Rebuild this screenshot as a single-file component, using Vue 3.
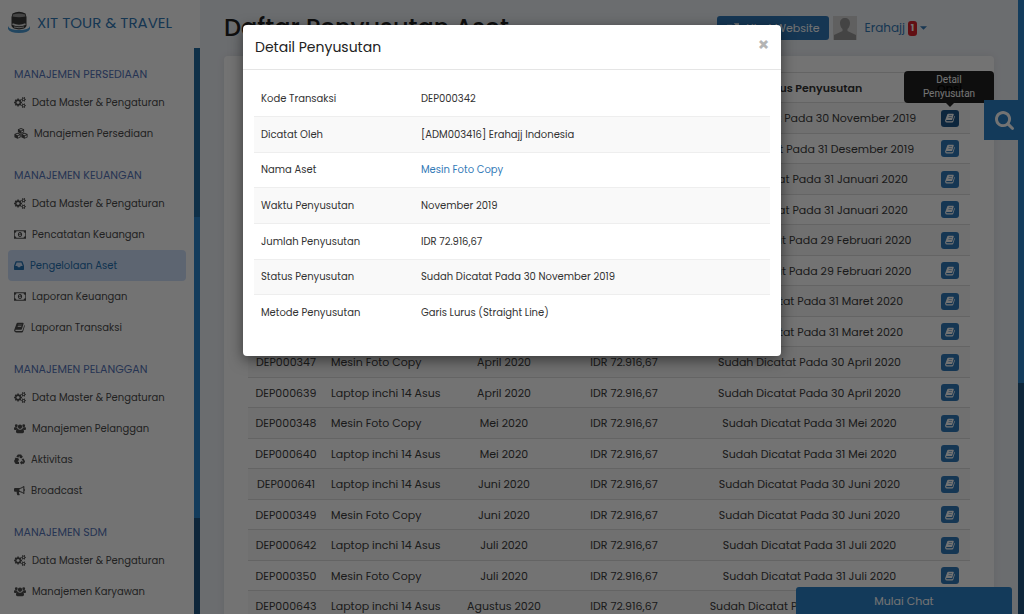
<script setup>
const cogs = 'M896 896q0-106-75-181t-181-75-181 75-75 181 75 181 181 75 181-75 75-181zm768 512q0-52-38-90t-90-38-90 38-38 90q0 53 37.5 90.5t90.5 37.5 90.5-37.5 37.5-90.5zm0-1024q0-52-38-90t-90-38-90 38-38 90q0 53 37.5 90.5t90.5 37.5 90.5-37.5 37.5-90.5zm-384 421v185q0 10-7 19.5t-16 10.5l-155 24q-11 35-32 76 34 48 90 115 7 11 7 20 0 12-7 19-23 30-82.5 89.5t-78.5 59.5q-11 0-21-7l-115-90q-37 19-77 31-11 108-23 155-7 24-30 24h-186q-11 0-20-7.5t-10-17.5l-23-153q-34-10-75-31l-118 89q-7 7-20 7-11 0-21-8-144-133-144-160 0-9 7-19 10-14 41-53t47-61q-23-44-35-82l-152-24q-10-1-17-9.5t-7-19.5v-185q0-10 7-19.5t16-10.5l155-24q11-35 32-76-34-48-90-115-7-11-7-20 0-12 7-20 22-30 82-89t79-59q11 0 21 7l115 90q34-18 77-32 11-108 23-154 7-24 30-24h186q11 0 20 7.5t10 17.5l23 153q34 10 75 31l118-89q8-7 20-7 11 0 21 8 144 133 144 160 0 8-7 19-12 16-42 54t-45 60q23 48 34 82l152 23q10 2 17 10.5t7 19.5zm640 533v140q0 16-149 31-12 27-30 52 51 113 51 138 0 4-4 7-122 71-124 71-8 0-46-47t-52-68q-20 2-30 2t-30-2q-14 21-52 68t-46 47q-2 0-124-71-4-3-4-7 0-25 51-138-18-25-30-52-149-15-149-31v-140q0-16 149-31 13-29 30-52-51-113-51-138 0-4 4-7 4-2 35-20t59-34 30-16q8 0 46 46.5t52 67.5q20-2 30-2t30 2q51-71 92-112l6-2q4 0 124 70 4 3 4 7 0 25-51 138 17 23 30 52 149 15 149 31zm0-1024v140q0 16-149 31-12 27-30 52 51 113 51 138 0 4-4 7-122 71-124 71-8 0-46-47t-52-68q-20 2-30 2t-30-2q-14 21-52 68t-46 47q-2 0-124-71-4-3-4-7 0-25 51-138-18-25-30-52-149-15-149-31v-140q0-16 149-31 13-29 30-52-51-113-51-138 0-4 4-7 4-2 35-20t59-34 30-16q8 0 46 46.5t52 67.5q20-2 30-2t30 2q51-71 92-112l6-2q4 0 124 70 4 3 4 7 0 25-51 138 17 23 30 52 149 15 149 31z'
const book = 'M5.500 1H13q1.300 0 1 1.300l-2.400 8q-.3 1-1.300 1H2.600q-1 0-.6.900.3.800 1.400.800h8q.8 0 1-.7L15 4.500q.9.5.7 1.400l-2.500 8q-.4 1.300-1.700 1.300H3.200Q.8 15.200.2 12.800q-.2-.8.2-1.600L3.600 2.500Q4 1 5.500 1zM6.200 3.900l-.2.800h5.200l.2-.8zM5.500 6.300l-.2.800h5.200l.2-.8z'
const icons = {
  cogs: { box: '0 0 1920 1792', w: 12, d: cogs },
  book: { box: '0 0 16 16', w: 11, d: book },
  cubes: { box: '0 0 20 16', w: 14, d: 'M10 0l4.500 1.800v4.400L10 8.200 5.500 6.200V1.800zM10 1.300L7.200 2.400 10 3.500l2.800-1.100zM10.600 4.600v2.200l2.700-1.200V3.500zM5 7l4.600 1.900v4.700L5 15.800.4 13.600V8.900zM5 8.300L2.200 9.400 5 10.600l2.800-1.200zM5.600 11.800v2.300l2.700-1.300v-2.200zM15 7l4.600 1.900v4.700L15 15.800l-4.600-2.200V8.900zM15 8.300l-2.800 1.100 2.800 1.200 2.800-1.200zM15.600 11.800v2.300l2.700-1.300v-2.200z' },
  money: { box: '0 0 20 16', w: 12, d: 'M0 1h20v14H0zM4 2.400A2.800 2.800 0 0 1 1.200 5.200v5.600A2.800 2.800 0 0 1 4 13.600h12A2.800 2.800 0 0 1 18.800 10.800V5.200A2.800 2.800 0 0 1 16 2.400zM10 3.800c2 0 3.500 1.900 3.500 4.200s-1.500 4.200-3.500 4.200S6.500 10.300 6.500 8 8 3.800 10 3.800zM9.500 5.600L8.300 6.700l.6.6.5-.3v2.400h-.9v.9h3v-.9h-.9V5.600z' },
  inbox: { box: '0 0 16 14', w: 10, d: 'M3.500 0h9c.5 0 .8.300 1 .7L16 7.500v5.500c0 .6-.4 1-1 1H1c-.6 0-1-.4-1-1V7.500L2.500.7c.2-.4.5-.7 1-.7zM4.200 2L2 7.800h3.300l1 2h3.400l1-2H14L11.800 2z' },
  users: { box: '0 0 20 16', w: 12, d: 'M3.800 1a2.400 2.400 0 1 1 0 4.800 2.400 2.400 0 0 1 0-4.800zM16.200 1a2.400 2.400 0 1 1 0 4.800 2.400 2.400 0 0 1 0-4.800zM10 1.500a3.600 3.600 0 1 1 0 7.200 3.600 3.600 0 0 1 0-7.200zM1.600 5.600c.7.800 3.300 1 4 .4-.2 1.500.1 2.400.8 3.100-1.100 0-2 .4-2.700 1.200H1.500C.5 10.300 0 9.700 0 8.800c0-1.300.4-3.200 1.600-3.200zM18.400 5.600c-.7.800-3.300 1-4 .4.2 1.500-.1 2.400-.8 3.100 1.100 0 2 .4 2.700 1.200h2.200c1 0 1.500-.6 1.500-1.500 0-1.300-.4-3.200-1.600-3.200zM6.300 8.700c2 1.700 5.400 1.700 7.400 0 2.200 0 3 2 3 4.500 0 1.700-1.100 2.600-2.600 2.600H5.900c-1.500 0-2.600-.9-2.600-2.600 0-2.500.8-4.500 3-4.500z' },
  recycle: { box: '0 0 16 16', w: 11, d: 'M5.700.6h4.700l1.500 2.600 1.200-.7-1.600 3.700-4-.5 1.200-.7L7.500 2.900 6.200 5.300 3.300 3.700zM13.500 6.300l2.300 4c.4.800 0 1.500-.4 2.200l-1.100 1.700h-3v1.500L8.700 12.600l2.600-3.200v1.500h2.500l-2.800-2.900zM2.600 5.600l3.800.4 1.300 3.800-1.300-.7-1 2.100h1.900v3.300H3.200c-.8 0-1.200-.5-1.600-1.200L.3 11c-.3-.6-.2-1.100.1-1.700l1.500-2.700-1.200-.7z' },
  horn: { box: '0 0 18 16', w: 11, d: 'M16 .5c.6 0 1 .4 1 1v4c1.300.3 1.300 3 0 3.300v4c0 .6-.4 1-1 1-2.300-1.900-4.700-3.200-7.300-3.500-1 .4-.9 1.400-.2 2-.6 1 .2 1.700 1.100 2.500-.7 1.400-3.500 1.200-4.300.4-.5-1.600-1.300-3-.7-5H2c-1 0-2-.8-2-2V6c0-1.100.9-2 2-2h5.500c3 0 5.800-1.500 8.500-3.500zM15.200 2.500C13 4.100 11 5 9 5.400v3.500c2.100.4 4.200 1.300 6.200 2.900z' }
}
const groups = [
  { title: 'MANAJEMEN PERSEDIAAN', items: [['cogs', 'Data Master & Pengaturan'], ['cubes', 'Manajemen Persediaan']] },
  { title: 'MANAJEMEN KEUANGAN', items: [['cogs', 'Data Master & Pengaturan'], ['money', 'Pencatatan Keuangan'], ['inbox', 'Pengelolaan Aset'], ['money', 'Laporan Keuangan'], ['book', 'Laporan Transaksi']] },
  { title: 'MANAJEMEN PELANGGAN', items: [['cogs', 'Data Master & Pengaturan'], ['users', 'Manajemen Pelanggan'], ['recycle', 'Aktivitas'], ['horn', 'Broadcast']] },
  { title: 'MANAJEMEN SDM', items: [['cogs', 'Data Master & Pengaturan'], ['users', 'Manajemen Karyawan']] }
]
const copy = 'Mesin Foto Copy'
const laptop = 'Laptop inchi 14 Asus'
const rows = [
  ['DEP000342', copy, 'November 2019', '30 November 2019'],
  ['DEP000343', copy, 'Desember 2019', '31 Desember 2019'],
  ['DEP000344', copy, 'Januari 2020', '31 Januari 2020'],
  ['DEP000636', laptop, 'Januari 2020', '31 Januari 2020'],
  ['DEP000345', copy, 'Februari 2020', '29 Februari 2020'],
  ['DEP000637', laptop, 'Februari 2020', '29 Februari 2020'],
  ['DEP000346', copy, 'Maret 2020', '31 Maret 2020'],
  ['DEP000638', laptop, 'Maret 2020', '31 Maret 2020'],
  ['DEP000347', copy, 'April 2020', '30 April 2020'],
  ['DEP000639', laptop, 'April 2020', '30 April 2020'],
  ['DEP000348', copy, 'Mei 2020', '31 Mei 2020'],
  ['DEP000640', laptop, 'Mei 2020', '31 Mei 2020'],
  ['DEP000641', laptop, 'Juni 2020', '30 Juni 2020'],
  ['DEP000349', copy, 'Juni 2020', '30 Juni 2020'],
  ['DEP000642', laptop, 'Juli 2020', '31 Juli 2020'],
  ['DEP000350', copy, 'Juli 2020', '31 Juli 2020'],
  ['DEP000643', laptop, 'Agustus 2020', '31 Agustus 2020']
]
const details = [
  ['Kode Transaksi', 'DEP000342'],
  ['Dicatat Oleh', '[ADM003416] Erahajj Indonesia'],
  ['Nama Aset', copy],
  ['Waktu Penyusutan', 'November 2019'],
  ['Jumlah Penyusutan', 'IDR 72.916,67'],
  ['Status Penyusutan', 'Sudah Dicatat Pada 30 November 2019'],
  ['Metode Penyusutan', 'Garis Lurus (Straight Line)']
]
</script>

<template>
  <div class="app">
    <aside class="side">
      <a class="brand" href="#">
        <svg class="logo" viewBox="0 0 24 24">
          <path d="M1 15q1 4 11 4t11-4v3q-2 4-11 4T1 18z" fill="#4d9bd6" />
          <path d="M5.500 2.500Q12-1 18.500 2.500L19.500 6v9q-1 3-7.500 3.500Q5.500 18 4.500 15V6z" fill="#3a3a3a" />
          <path d="M6 3.500q6-2 12 0l.5 2q-6.500 1.500-13 0z" fill="#999" />
          <path d="M5.500 13q6.500 3 13 0" stroke="#ddd" stroke-width="1.500" fill="none" />
          <path d="M7 16q5 1.500 10 0" stroke="#ccc" stroke-width="1" fill="none" />
        </svg>
        <span>XIT TOUR &amp; TRAVEL</span>
      </a>
      <div class="sidebody">
        <nav class="nav">
          <section v-for="g in groups" :key="g.title">
            <h2>{{ g.title }}</h2>
            <a v-for="it in g.items" :key="it[1]" href="#" :class="['item', { active: it[0] === 'inbox' }]">
              <svg :viewBox="icons[it[0]].box" :width="icons[it[0]].w" height="11" fill-rule="evenodd"><path :d="icons[it[0]].d" /></svg>
              <span>{{ it[1] }}</span>
            </a>
          </section>
        </nav>
        <div class="sidescroll"><i></i></div>
      </div>
    </aside>

    <main class="main">
      <header class="head">
        <h1>Daftar Penyusutan Aset</h1>
        <div class="tools">
          <button class="visit">
            <svg viewBox="0 0 16 14" width="12" height="11"><path d="M9 0h7v7l-2.500-2.500L8 10 6 8l5.500-5.500zM2 2h5v2H2v8h10V9h2v5H0V2z" fill="#fff" /></svg>
            Lihat Website
          </button>
          <svg class="avatar" viewBox="0 0 24 24"><path d="M0 0h24v24H0z" fill="#d6d6d6" /><path d="M12 2c3 0 5 2 5 5 0 2-1 5-2.500 6v2L23 19v5H1v-5l8.500-4v-2C8 12 7 9 7 7c0-3 2-5 5-5z" fill="#979797" /></svg>
          <a class="user" href="#">Erahajj <b>1</b><svg viewBox="0 0 8 4" width="7" height="4"><path d="M0 0h8L4 4z" fill="currentColor" /></svg></a>
        </div>
      </header>
      <div class="card">
        <table class="list">
          <colgroup><col class="c1"><col class="c2"><col class="c3"><col class="c4"><col><col class="c6"></colgroup>
          <thead>
            <tr><th>Kode</th><th class="l">Nama Aset</th><th>Waktu</th><th>Jumlah</th><th>Status Penyusutan</th><th>Opsi</th></tr>
          </thead>
          <tbody>
            <tr v-for="(r, i) in rows" :key="r[0]">
              <td>{{ r[0] }}</td><td class="l">{{ r[1] }}</td><td>{{ r[2] }}</td><td>IDR 72.916,67</td><td>Sudah Dicatat Pada {{ r[3] }}</td>
              <td>
                <button :class="['open', { pressed: i === 0 }]" aria-label="Detail Penyusutan">
                  <svg viewBox="0 0 16 16" width="10" height="10"><path :d="book" fill="#fff" fill-rule="evenodd" /></svg>
                </button>
                <div v-if="i === 0" class="tip">Detail Penyusutan</div>
              </td>
            </tr>
          </tbody>
        </table>
      </div>
    </main>
    <div class="pagescroll"><i></i></div>
    <button class="search" aria-label="Cari">
      <svg viewBox="64 128 1664 1664" width="19" height="19"><path d="M1216 832q0-185-131.500-316.500t-316.500-131.500-316.500 131.500-131.500 316.500 131.500 316.500 316.500 131.500 316.500-131.500 131.500-316.500zm512 832q0 52-38 90t-90 38q-54 0-90-38l-343-342q-179 124-399 124-143 0-273.500-55.500t-225-150-150-225-55.500-273.500 55.500-273.500 150-225 225-150 273.500-55.500 273.500 55.500 225 150 150 225 55.500 273.500q0 220-124 399l343 343q37 37 37 90z" fill="#fff" /></svg>
    </button>
    <button class="chat">Mulai Chat</button>

    <div class="backdrop">
      <div class="modal" role="dialog" aria-labelledby="modal-title">
        <header class="mhead">
          <h3 id="modal-title">Detail Penyusutan</h3>
          <button class="close" aria-label="Tutup">×</button>
        </header>
        <div class="mbody">
          <table class="detail">
            <tbody>
              <tr v-for="d in details" :key="d[0]">
                <th scope="row">{{ d[0] }}</th>
                <td><a v-if="d[0] === 'Nama Aset'" href="#">{{ d[1] }}</a><template v-else>{{ d[1] }}</template></td>
              </tr>
            </tbody>
          </table>
        </div>
      </div>
    </div>
  </div>
</template>

<style>
body { margin: 0; }
</style>

<style scoped>
* { box-sizing: border-box; }
.app { position: relative; display: flex; height: 100vh; overflow: hidden; background: #eef1f6; color: #333; font: 11px/16px Poppins, Inter, "Open Sans", sans-serif; }
a { color: #337ab7; text-decoration: none; }
button { border: 0; padding: 0; font: inherit; color: #fff; background: #2f78b8; }
h1, h2, h3 { margin: 0; font-weight: 400; }
.side { display: flex; flex-direction: column; width: 200px; flex: none; background: #fff; }
.brand { display: flex; align-items: center; gap: 6px; height: 48px; padding: 0 0 2px 7px; font-size: 15px; flex: none; white-space: nowrap; }
.logo { width: 24px; height: 24px; }
.sidebody { flex: 1; min-height: 0; display: flex; }
.nav { flex: 1; padding: 0 8px; overflow: hidden; }
.nav h2 { height: 39px; padding: 14px 0 0 6px; font-size: 11px; line-height: 24px; color: #5574b8; white-space: nowrap; }
.item { display: flex; align-items: center; gap: 6px; height: 31px; padding-left: 6px; font-size: 10px; color: #4c4c4c; border-radius: 4px; white-space: nowrap; }
.item svg { fill: currentColor; flex: none; }
.item.active { background: #cfe0fa; color: #2471b2; }
.sidescroll { width: 6px; padding-top: 169px; background: linear-gradient(#236b9f 50%, #1f5580 50%); }
.sidescroll i { display: block; height: 301px; background: #2a86cc; }
.main { flex: 1; min-width: 0; padding: 0 24px; }
.head { display: flex; justify-content: space-between; align-items: center; height: 56px; padding-right: 67px; }
h1 { font-size: 24px; line-height: 32px; font-weight: 500; color: #222; }
.tools { display: flex; align-items: center; gap: 4px; }
.visit { display: flex; align-items: center; justify-content: space-between; width: 112px; height: 24px; padding: 0 9px 0 10px; border-radius: 3px; white-space: nowrap; }
.avatar { width: 24px; height: 24px; }
.user { display: flex; align-items: center; gap: 3px; padding-left: 4px; font-size: 12px; }
.user b { width: 9px; height: 15px; border-radius: 3px; background: #d9232a; color: #fff; font-size: 9px; line-height: 15px; text-align: center; }
.card { padding: 16px 24px; background: #fff; border-radius: 4px; box-shadow: 0 0 8px rgba(0, 0, 0, .08); }
table { width: 100%; border-collapse: collapse; table-layout: fixed; }
.c1 { width: 76px; } .c2 { width: 126px; } .c3 { width: 108px; } .c4 { width: 132px; } .c6 { width: 41px; }
.list th, .list td { height: 31px; padding: 0; border-top: 1px solid #ddd; text-align: center; white-space: nowrap; }
.list tr:nth-child(even) td, .list th { height: 30px; }
.list tbody tr:nth-child(odd) { background: #f8f8f8; }
.list .l { text-align: left; padding-left: 7px; }
.list th { font-weight: 600; }
.list td { position: relative; color: #3c3c3c; }
.open { display: flex; align-items: center; justify-content: center; width: 18px; height: 17px; margin: auto; border-radius: 3px; }
.open.pressed { background: #1d5488; }
.tip { position: absolute; right: -24px; bottom: 30px; width: 90px; height: 32px; padding: 2px 16px; border-radius: 4px; background: rgba(0, 0, 0, .87); color: #fff; font: 10px/14px Roboto, sans-serif; text-align: center; white-space: normal; }
.tip::after { content: ""; position: absolute; left: 42px; top: 32px; border: 4px solid transparent; border-top-color: #222; }
.pagescroll { width: 6px; flex: none; background: #1f5580; }
.pagescroll i { display: block; height: 383px; background: #2a86cc; }
.search { position: absolute; right: 0; top: 100px; display: grid; place-items: center; width: 40px; height: 40px; background: #2a82c8; }
.chat { position: absolute; right: 12px; bottom: 0; width: 216px; height: 27px; border-radius: 3px 3px 0 0; background: #2a82c8; }
.backdrop { position: absolute; inset: 0; padding: 25px 243px; background: rgba(0, 0, 0, .55); }
.modal { background: #fff; border-radius: 4px; box-shadow: 0 4px 14px rgba(0, 0, 0, .5); }
.mhead { display: flex; justify-content: space-between; height: 45px; padding: 0 12px; border-bottom: 1px solid #e5e5e5; }
h3 { font-size: 14px; line-height: 44px; color: #222; }
.close { align-self: flex-start; background: none; color: #b4b4b4; font: 900 16px/36px Inter, sans-serif; }
.mbody { padding: 10px 11px 25px; }
.detail th, .detail td { height: 36px; padding: 0 7px; border-top: 1px solid #eee; font-size: 10px; text-align: left; font-weight: 400; }
.detail tr:nth-child(3n) > * { height: 35px; }
.detail th { width: 160px; }
.detail tr:first-child > * { border-top-color: #fff; }
.detail tr:nth-child(even) { background: #f9f9f9; }
</style>
